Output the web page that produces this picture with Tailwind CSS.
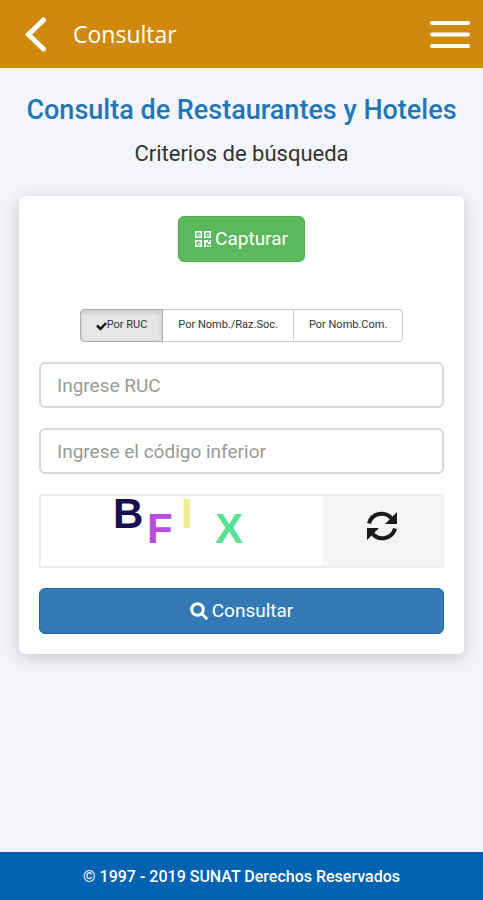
<!DOCTYPE html>
<html lang="es">
<head>
    <meta charset="UTF-8">
    <meta name="viewport" content="width=device-width, initial-scale=1.0">
    <title>Consulta de Restaurantes y Hoteles</title>
    <script src="https://cdn.jsdelivr.net/npm/@tailwindcss/browser@4"></script>
</head>
<body class="min-h-screen flex flex-col bg-[#f3f5fa] font-[Roboto,sans-serif] text-[#333]">
    <header class="h-[68px] flex items-center bg-[#cf8a0e] text-white pl-6 pr-3">
        <button type="button" aria-label="Volver">
            <svg class="w-6 h-9" viewBox="0 0 24 36" fill="none" stroke="currentColor" stroke-width="5" stroke-linecap="round"><path d="M19.500 4L4.500 18.500L19.500 33"/></svg>
        </button>
        <h1 class="ml-[25px] text-[23px] font-[Open_Sans,sans-serif]">Consultar</h1>
        <button type="button" class="ml-auto" aria-label="Menú">
            <svg class="w-[42px] h-8" viewBox="0 0 42 32" stroke="currentColor" stroke-width="4" stroke-linecap="round"><path d="M3 5h36M3 16.500h36M3 28h36"/></svg>
        </button>
    </header>

    <main class="flex-1 px-[19px] pt-6 text-center">
        <h2 class="text-[27px] leading-9 font-medium text-[#1f77b8] whitespace-nowrap -mx-2">Consulta de Restaurantes y Hoteles</h2>
        <h3 class="mt-2 text-[22px] leading-9">Criterios de búsqueda</h3>

        <form class="mt-6 p-5 bg-white rounded-md shadow-[0_4px_18px_rgba(0,0,0,0.18)] flex flex-col gap-5">
            <button type="button" class="self-center h-[46px] px-4 flex items-center gap-1 rounded-md border border-[#4cae4c] bg-[#5cb85c] text-white text-[19px]">
                <svg class="size-4" viewBox="0 0 16 16" fill="currentColor" aria-hidden="true">
                    <path fill-rule="evenodd" d="M0 0h7v7H0zM1.500 1.500v4h4v-4zM9 0h7v7H9zM10.500 1.500v4h4v-4zM0 9h7v7H0zM1.500 10.500v4h4v-4z"/>
                    <path d="M3 3h1.500v1.500H3zM12 3h1.500v1.500H12zM3 12h1.500v1.500H3zM9 9h4v2h1.500V9H16v4h-3v-1.500h-2V16H9zM12 14h2v2h-2zM15 14h1v2h-1z"/>
                </svg>
                Capturar
            </button>

            <div class="mt-[27px] self-center flex h-[33px] text-[11px] whitespace-nowrap">
                <label class="flex items-center px-[15px] border border-[#adadad] rounded-l bg-[#e6e6e6] shadow-[inset_0_3px_5px_rgba(0,0,0,0.125)]">
                    <input type="radio" name="tipo" class="sr-only" checked>
                    <svg class="w-[11px] h-[10px]" viewBox="0 0 11 10" fill="none" stroke="#111" stroke-width="2.500" aria-hidden="true"><path d="M1 4.500L4.500 8L10 2"/></svg>
                    Por RUC
                </label>
                <label class="flex items-center px-[15px] border-y border-r border-[#ccc]">
                    <input type="radio" name="tipo" class="sr-only">
                    Por Nomb./Raz.Soc.
                </label>
                <label class="flex items-center px-[15px] border-y border-r border-[#ccc] rounded-r">
                    <input type="radio" name="tipo" class="sr-only">
                    Por Nomb.Com.
                </label>
            </div>

            <input type="text" aria-label="RUC" placeholder="Ingrese RUC" class="w-full h-[46px] px-4 text-[19px] border-2 border-[#d8d8d8] rounded-md placeholder:text-[#999]">
            <input type="text" aria-label="Código" placeholder="Ingrese el código inferior" class="w-full h-[46px] px-4 text-[19px] border-2 border-[#d8d8d8] rounded-md placeholder:text-[#999]">

            <div class="flex h-[74px] border-2 border-[#eee]">
                <div class="w-[70%] flex justify-center">
                    <svg class="w-[140px] h-[70px] overflow-visible" viewBox="0 0 140 70" font-family="Liberation Sans, sans-serif" font-weight="bold" font-size="42" role="img" aria-label="Captcha">
                        <text x="2" y="32" fill="#17104f">B</text>
                        <text x="36" y="47" fill="#bb4be2">F</text>
                        <text x="70" y="32" fill="#ecec90">I</text>
                        <text x="104" y="47" fill="#55e395">X</text>
                    </svg>
                </div>
                <button type="button" class="flex-1 flex justify-center pt-[14px] bg-[#f5f5f5] text-[#1b1b1b]" aria-label="Actualizar código">
                    <svg class="size-8" viewBox="0 0 32 32">
                        <g fill="none" stroke="currentColor" stroke-width="4"><path d="M3 13.500A13 13 0 0 1 26 9"/><path d="M29 18.500A13 13 0 0 1 6 23"/></g>
                        <path fill="currentColor" d="M31 2v12H19zM1 30V18h12z"/>
                    </svg>
                </button>
            </div>

            <button type="submit" class="h-[46px] flex items-center justify-center gap-1 rounded-md border border-[#2268a5] bg-[#337ab7] text-white text-[19px]">
                <svg class="size-[18px]" viewBox="0 0 18 18" fill="none" stroke="currentColor" stroke-width="3" stroke-linecap="round" aria-hidden="true"><circle cx="7.500" cy="7.500" r="5.800"/><path d="M12 12l4.300 4.300"/></svg>
                Consultar
            </button>
        </form>
    </main>

    <footer class="h-12 flex items-center justify-center bg-[#0062b1] border-t border-[#1c56a0] text-white text-base font-medium">
        © 1997 - 2019 SUNAT Derechos Reservados
    </footer>
</body>
</html>
